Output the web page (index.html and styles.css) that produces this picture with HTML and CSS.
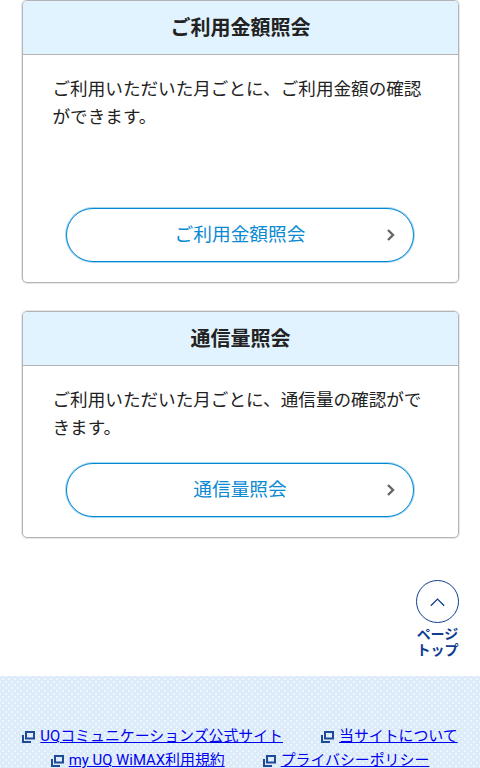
FILE: index.html
```html
<!DOCTYPE html>
<html lang="ja">
<head>
<meta charset="utf-8">
<title>ご利用金額照会</title>
<link rel="stylesheet" href="styles.css">
</head>
<body>
<main class="cards">
  <section class="card card-tall">
    <h2 class="card-title">ご利用金額照会</h2>
    <div class="card-body">
      <p class="card-text">ご利用いただいた月ごとに、ご利用金額の確認ができます。</p>
      <a class="btn" href="#">ご利用金額照会<svg class="chev" viewBox="0 0 10 14"><path d="M2 2l5 5-5 5" fill="none" stroke="#666" stroke-width="2.4"/></svg></a>
    </div>
  </section>
  <section class="card">
    <h2 class="card-title">通信量照会</h2>
    <div class="card-body">
      <p class="card-text">ご利用いただいた月ごとに、通信量の確認ができます。</p>
      <a class="btn" href="#">通信量照会<svg class="chev" viewBox="0 0 10 14"><path d="M2 2l5 5-5 5" fill="none" stroke="#666" stroke-width="2.4"/></svg></a>
    </div>
  </section>
</main>
<div class="pagetop-wrap">
  <a class="pagetop" href="#">
    <span class="pagetop-circle"><svg viewBox="0 0 20 12" class="pagetop-icon"><path d="M2 10.500l8-8 8 8" fill="none" stroke="#0f3d91" stroke-width="1.600"/></svg></span>
    <span class="pagetop-label">ページ<br>トップ</span>
  </a>
</div>
<footer class="footer">
  <ul class="links">
    <li class="link-item link-wide"><svg class="ext" viewBox="0 0 13 12"><path d="M4 1h8v6.500h-8z" fill="none" stroke="#1f4a96" stroke-width="2"/><path d="M1 4v7h8" fill="none" stroke="#1f4a96" stroke-width="2"/></svg><a href="#">UQコミュニケーションズ公式サイト</a></li>
    <li class="link-item"><svg class="ext" viewBox="0 0 13 12"><path d="M4 1h8v6.500h-8z" fill="none" stroke="#1f4a96" stroke-width="2"/><path d="M1 4v7h8" fill="none" stroke="#1f4a96" stroke-width="2"/></svg><a href="#">当サイトについて</a></li>
    <li class="link-item link-wide"><svg class="ext" viewBox="0 0 13 12"><path d="M4 1h8v6.500h-8z" fill="none" stroke="#1f4a96" stroke-width="2"/><path d="M1 4v7h8" fill="none" stroke="#1f4a96" stroke-width="2"/></svg><a href="#">my UQ WiMAX利用規約</a></li>
    <li class="link-item"><svg class="ext" viewBox="0 0 13 12"><path d="M4 1h8v6.500h-8z" fill="none" stroke="#1f4a96" stroke-width="2"/><path d="M1 4v7h8" fill="none" stroke="#1f4a96" stroke-width="2"/></svg><a href="#">プライバシーポリシー</a></li>
  </ul>
</footer>
</body>
</html>
```
FILE: styles.css
```css
* { box-sizing: border-box; }
html, body { margin: 0; padding: 0; }
body {
  height: 768px;
  overflow: hidden;
  background: #fff;
  color: #222;
  font-family: "Roboto", "Noto Sans CJK JP", sans-serif;
}
.cards {
  display: flex;
  flex-direction: column;
  gap: 28px;
  padding: 0 21px 0 22px;
}
.card {
  display: flex;
  flex-direction: column;
  border: 1px solid #b4b4b4;
  border-radius: 5px;
  box-shadow: 0 0 0 1px rgba(180, 180, 180, 0.3);
  overflow: hidden;
}
.card-tall { height: 283px; }
.card-title {
  margin: 0;
  height: 54px;
  padding-bottom: 2px;
  display: flex;
  align-items: center;
  justify-content: center;
  background: #e1f3fe;
  border-bottom: 1px solid #b4b4b4;
  font-size: 20px;
  font-weight: 700;
  color: #222;
}
.card-body {
  flex: 1;
  display: flex;
  flex-direction: column;
  justify-content: space-between;
  padding: 20px 30px 20px 29.5px;
}
.card-text {
  margin: 0 0 21px;
  font-size: 17.6px;
  line-height: 28px;
}
.btn {
  position: relative;
  display: flex;
  align-items: center;
  justify-content: center;
  height: 54px;
  margin: 0 14px 0 13.5px;
  padding-bottom: 5px;
  border: 1px solid #0088d2;
  border-radius: 27px;
  box-shadow: 0 0 0 1px rgba(0, 136, 210, 0.35);
  color: #0a8ad2;
  font-size: 18.7px;
  text-decoration: none;
  background: #fff;
}
.chev {
  position: absolute;
  right: 17px;
  top: 19px;
  width: 10px;
  height: 14px;
}
.pagetop-wrap {
  display: flex;
  justify-content: flex-end;
  padding: 42px 21px 0 0;
}
.pagetop {
  display: flex;
  flex-direction: column;
  align-items: center;
  text-decoration: none;
  color: #0f3d91;
}
.pagetop-circle {
  width: 43px;
  height: 43px;
  border: 1.5px solid #0f3d91;
  border-radius: 50%;
  display: flex;
  align-items: center;
  justify-content: center;
}
.pagetop-icon { width: 17px; height: 10px; }
.pagetop-label {
  margin-top: 3px;
  font-size: 14px;
  line-height: 16px;
  font-weight: 700;
  text-align: center;
}
.footer {
  margin-top: 18px;
  height: 92px;
  padding-top: 48px;
  background-color: #dcebfa;
  background-image:
    radial-gradient(circle, #eef5fd 1px, transparent 1.2px),
    radial-gradient(circle, #eef5fd 1px, transparent 1.2px);
  background-size: 6px 6px;
  background-position: 0 0, 3px 3px;
}
.links {
  list-style: none;
  margin: 0;
  padding: 0;
  display: flex;
  flex-wrap: wrap;
  justify-content: center;
  column-gap: 38px;
  font-size: 14.9px;
  line-height: 24px;
}
.link-item {
  display: flex;
  align-items: center;
  gap: 5px;
}
.link-item a { color: #0000ee; }
.ext { width: 13px; height: 12px; flex: none; margin-top: 2px; }
```
